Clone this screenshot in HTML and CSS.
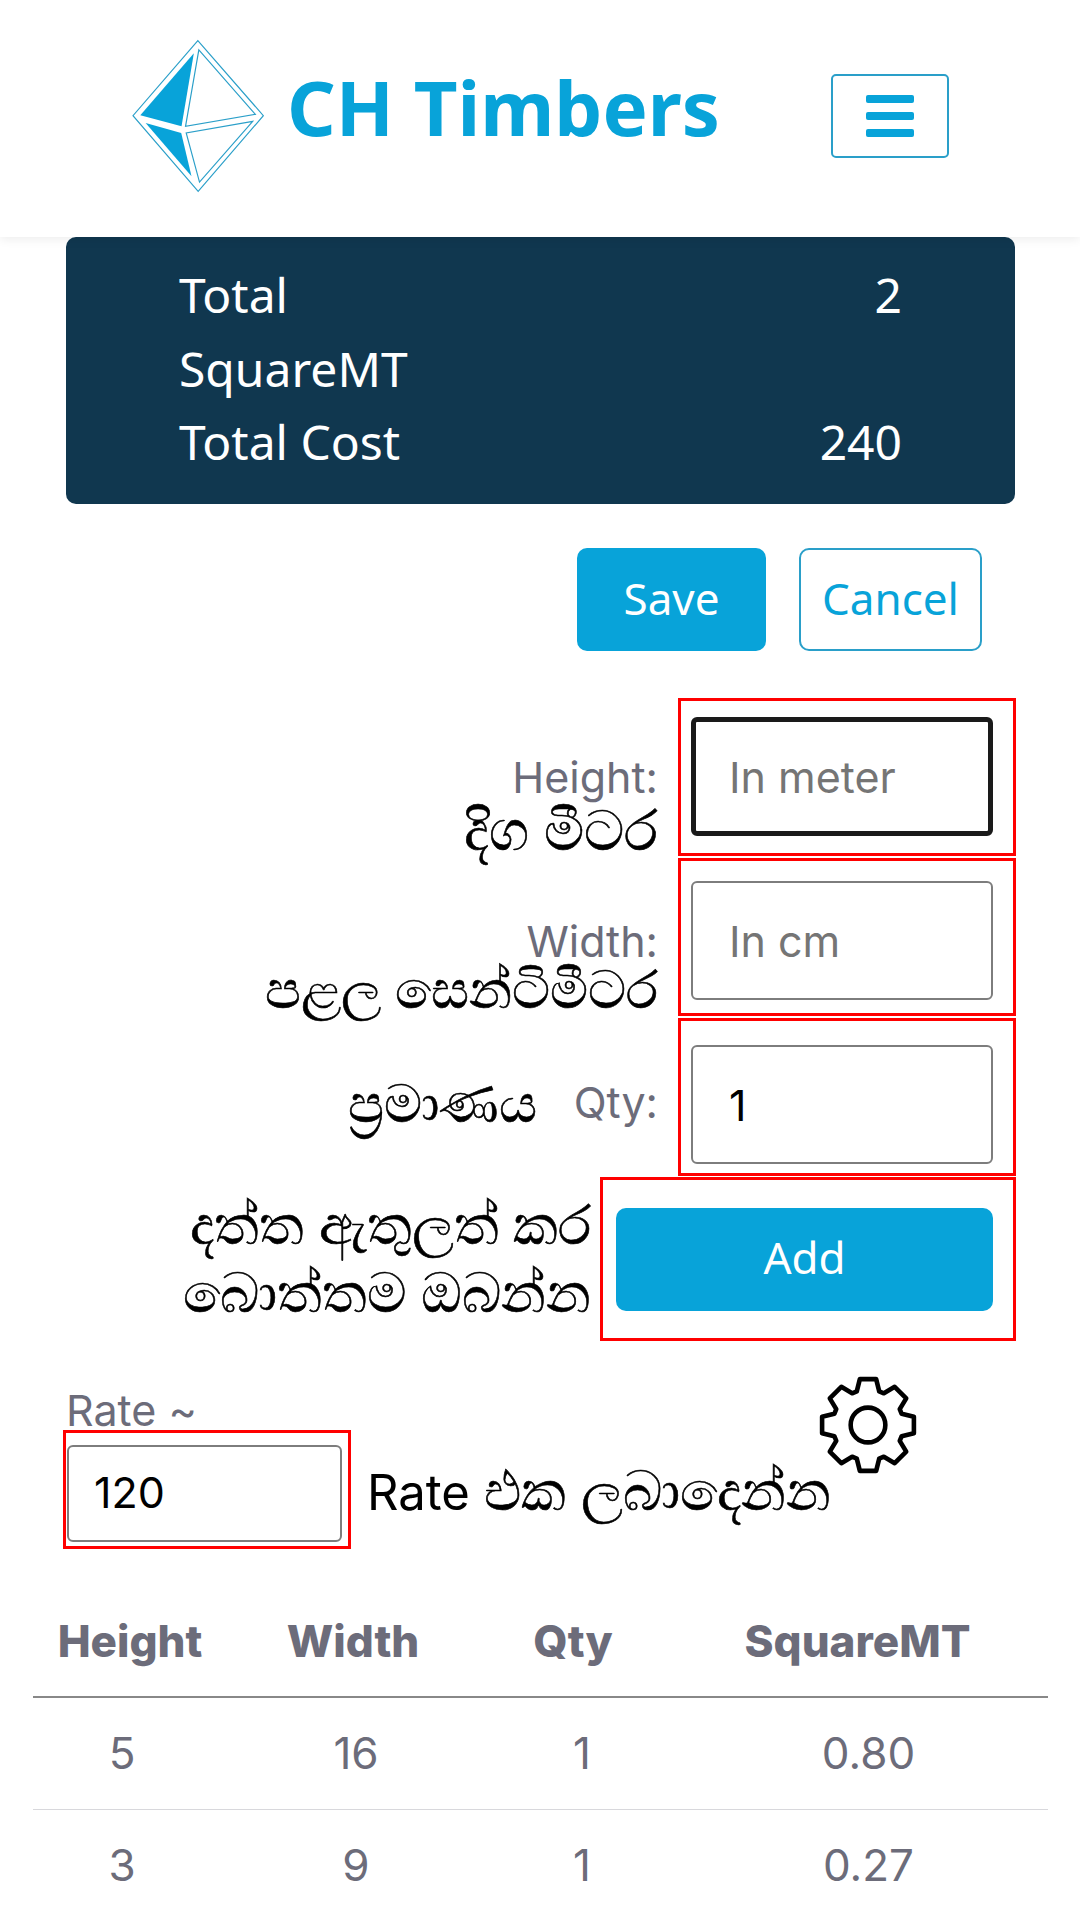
FILE: index.html
```html
<!DOCTYPE html>
<html lang="en">
<head>
<meta charset="utf-8">
<title>CH Timbers</title>
<link rel="stylesheet" href="styles.css">
</head>
<body>
<header class="topbar">
  <svg class="logo" viewBox="95 58 400 462" aria-hidden="true">
    <polygon class="logo-line" points="293,62 490,288 294,516 98,288"/>
    <polygon class="logo-fill" points="281,100 120,287 244,320"/>
    <polygon class="logo-fill" points="136,310 243,340 274,470"/>
    <polygon class="logo-line" points="296,90 466,284 256,320"/>
    <polygon class="logo-line" points="458,305 258,340 298,488"/>
  </svg>
  <div class="brand">CH Timbers</div>
  <button class="menu-btn" aria-label="Menu"><span></span><span></span><span></span></button>
</header>
<main>
  <section class="summary">
    <div>Total</div><div class="value">2</div>
    <div>SquareMT</div><div class="value"></div>
    <div>Total Cost</div><div class="value">240</div>
  </section>
  <div class="actions">
    <button class="btn btn-solid">Save</button>
    <button class="btn btn-outline">Cancel</button>
  </div>
  <div class="form-row">
    <div class="label-stack"><div class="field-label">Height:</div><div class="si si-large">දිග මීටර</div></div>
    <div class="red-box red-box-first"><input class="field field-focus" placeholder="In meter"></div>
  </div>
  <div class="form-row">
    <div class="label-stack label-stack-tight"><div class="field-label">Width:</div><div class="si si-wide">පළල සෙන්ටිමීටර</div></div>
    <div class="red-box red-box-second"><input class="field" placeholder="In cm"></div>
  </div>
  <div class="form-row">
    <div class="label-inline"><div class="si si-qty">ප්‍රමාණය</div><div class="field-label">Qty:</div></div>
    <div class="red-box red-box-third"><input class="field" value="1"></div>
  </div>
  <div class="form-row form-row-add">
    <div class="si si-two">දත්ත ඇතුලත් කර<br>බොත්තම ඔබන්න</div>
    <div class="red-box red-box-add"><button class="btn btn-solid btn-add">Add</button></div>
  </div>
  <div class="rate-label">Rate ~</div>
  <div class="rate-row">
    <div class="red-box red-box-rate"><input class="field field-rate" value="120"></div>
    <div class="si si-rate"><span class="latin">Rate</span> එක ලබාදෙන්න</div>
    <svg class="gear" viewBox="-50 -50 100 100" aria-hidden="true">
      <polygon points="-11,-33 -8,-45 8,-45 11,-33 15.55,-31.11 26.16,-37.48 37.48,-26.16 31.11,-15.55 33,-11 45,-8 45,8 33,11 31.11,15.55 37.48,26.16 26.16,37.48 15.55,31.11 11,33 8,45 -8,45 -11,33 -15.55,31.11 -26.16,37.48 -37.48,26.16 -31.11,15.55 -33,11 -45,8 -45,-8 -33,-11 -31.11,-15.55 -37.48,-26.16 -26.16,-37.48 -15.55,-31.11"/>
      <circle r="17"/>
    </svg>
  </div>
  <section class="table">
    <div class="thead"><div>Height</div><div>Width</div><div>Qty</div><div>SquareMT</div></div>
    <div class="trow"><div>5</div><div>16</div><div>1</div><div class="cell-last">0.80</div></div>
    <div class="trow"><div>3</div><div>9</div><div>1</div><div class="cell-last">0.27</div></div>
  </section>
</main>
</body>
</html>
```
FILE: styles.css
```css
* { box-sizing: border-box; }
html, body { margin: 0; height: 1920px; overflow: hidden; background: #fff; }
body { font-family: "Inter", "Noto Sans", "DejaVu Sans", sans-serif; color: #6c6c7a; }

.topbar {
  height: 237px;
  display: flex;
  align-items: flex-start;
  padding-left: 132px;
  background: #fff;
  box-shadow: 0 2px 10px rgba(0, 0, 0, 0.08);
  position: relative;
}
.logo { width: 133px; height: 154px; margin-top: 39px; flex: none; }
.logo-line { fill: none; stroke: #2a9fc9; stroke-width: 3.5; }
.logo-fill { fill: #08a3d9; }
.brand {
  font-family: "Noto Sans", sans-serif;
  font-weight: 700;
  font-size: 76px;
  line-height: 100px;
  color: #08a3d9;
  margin: 57px 0 0 22px;
  width: 545px;
  white-space: nowrap;
}
.menu-btn {
  width: 118px;
  height: 84px;
  margin-top: 74px;
  margin-left: -1px;
  padding: 0;
  background: #fff;
  border: 2px solid #2a9fc9;
  border-radius: 5px;
  display: flex;
  flex-direction: column;
  align-items: center;
  justify-content: center;
  gap: 9px;
}
.menu-btn span { width: 48px; height: 8px; border-radius: 2px; background: #08a3d9; }

.summary {
  margin-left: 66px;
  width: 949px;
  height: 267px;
  padding: 21px 113px 25px;
  background: #10374f;
  border-radius: 10px;
  color: #fff;
  font-family: "Noto Sans", sans-serif;
  font-size: 48px;
  line-height: 73.5px;
  display: grid;
  grid-template-columns: 1fr auto;
}
.value { text-align: right; }

.actions {
  display: flex;
  justify-content: flex-end;
  gap: 33px;
  margin-top: 44px;
  padding-right: 98px;
}
.btn {
  font-family: "Noto Sans", sans-serif;
  font-size: 44px;
  border-radius: 10px;
  height: 103px;
  padding: 0 0 4px;
}
.btn-solid { width: 189px; background: #08a3d9; border: 0; color: #fff; }
.btn-outline { width: 183px; background: #fff; border: 2px solid #2a9fc9; color: #08a3d9; }

.form-row {
  display: flex;
  justify-content: flex-end;
  align-items: flex-end;
  padding-right: 64px;
  margin-top: 2px;
}
.actions + .form-row { margin-top: 47px; }
.red-box {
  width: 338px;
  height: 158px;
  border: 3px solid #f00;
  display: flex;
  align-items: flex-start;
  padding-left: 10px;
  flex: none;
}
.red-box-first { padding-top: 16px; }
.red-box-second { padding-top: 20px; }
.red-box-third { padding-top: 24px; }
.field {
  width: 302px;
  height: 119px;
  padding: 0 36px;
  background: #fff;
  border: 2px solid #7d7d7d;
  border-radius: 6px;
  font-family: "Inter", sans-serif;
  font-size: 43px;
  color: #000;
}
.field::placeholder { color: #757575; opacity: 1; }
.field-focus { border: 5px solid #1a1a1a; padding: 0 33px; }

.label-stack { margin: 0 20px 2px 0; text-align: right; }
.label-stack-tight .field-label { margin-bottom: -4px; }
.field-label { font-size: 43px; line-height: 50px; }
.si {
  font-family: "Noto Sans", "DejaVu Sans", sans-serif;
  font-size: 55px;
  line-height: 52px;
  color: #000;
  white-space: nowrap;
  -webkit-text-stroke: 0.6px #000;
}
.si-large { font-size: 56px; }
.si-wide { font-size: 53px; }
.si-qty { font-size: 53px; }
.label-inline { display: flex; gap: 37px; align-items: center; margin: 0 20px 48px 0; }
.si-two { line-height: 68px; text-align: right; margin: 0 9px 16px 0; }

.form-row-add { margin-top: 1px; }
.red-box-add { width: 416px; height: 164px; padding-left: 13px; align-items: center; }
.btn-add { width: 377px; }

.rate-label { margin: 45px 0 0 66px; font-size: 43px; line-height: 48px; }
.rate-row { display: flex; align-items: flex-start; margin: -4px 0 0 63px; }
.red-box-rate { width: 288px; height: 119px; padding: 12px 0 0 1px; }
.field-rate { width: 275px; height: 97px; padding: 0 25px 3px; }
.si-rate { margin: 33px 0 0 16px; line-height: 52px; font-size: 55px; }
.latin { font-family: "Inter", sans-serif; font-size: 49px; -webkit-text-stroke: 0; }
.gear { width: 102px; height: 102px; margin: -56px 0 0 -14px; flex: none; }
.gear polygon, .gear circle { fill: none; stroke: #000; stroke-width: 4.5; stroke-linejoin: round; }

.table { margin: 57px 32px 0 33px; font-size: 44px; }
.thead, .trow { display: grid; text-align: center; }
.thead {
  grid-template-columns: 194px 252px 188px 1fr;
  height: 92px;
  line-height: 70px;
  font-weight: 800;
  border-bottom: 2px solid #888;
}
.trow {
  grid-template-columns: 178px 290px 162px 1fr;
  height: 112px;
  line-height: 110px;
  border-bottom: 1px solid #d8d8dc;
}
.trow:last-child { border-bottom: 0; }
.cell-last { padding-left: 26px; }
```
